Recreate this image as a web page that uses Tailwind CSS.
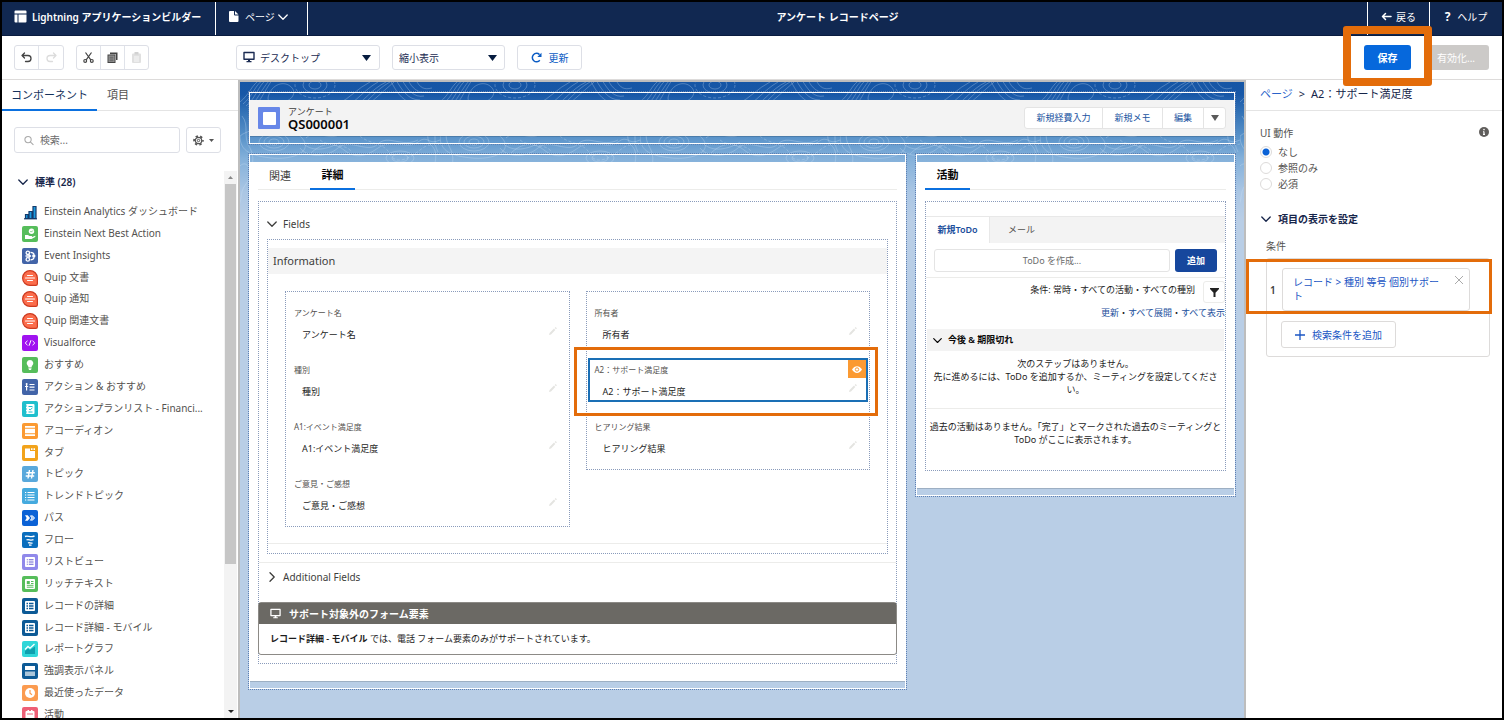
<!DOCTYPE html>
<html lang="ja">
<head>
<meta charset="utf-8">
<meta name="viewport" content="width=device-width, initial-scale=1">
<title>Lightning アプリケーションビルダー</title>
<script src="https://cdn.jsdelivr.net/npm/@tailwindcss/browser@4"></script>
</head>
<body class="flex h-screen flex-col overflow-hidden border-2 border-black bg-white font-['Noto_Sans','Noto_Sans_CJK_JP',sans-serif] text-[10px] leading-4 text-[#3e3e3c]">

<svg class="hidden" aria-hidden="true">
  <defs>
    <symbol id="pencil" viewBox="0 0 10 10"><path d="M1 9l.6-2L6 2.600l1.300 1.300L3 8.400zM6.700 2l1-.9 1.200 1.200-.9 1z" fill="#e4e4e1"/></symbol>
    <symbol id="chev" viewBox="0 0 10 10"><path d="M.8 3L5 7.200 9.200 3" fill="none" stroke="currentColor" stroke-width="1.300" stroke-linecap="round" stroke-linejoin="round"/></symbol>
    <symbol id="quip" viewBox="0 0 16 16"><path d="M8 .6a7.400 7.400 0 1 0 0 14.800h5.800a1.600 1.600 0 0 0 1.600-1.600V8A7.400 7.400 0 0 0 8 .6z" fill="#fb6d4c" stroke="#cd3a1f" stroke-width="1.200"/><path d="M5.500 5.500h5M3.500 8h9M5.500 10.500h5" stroke="#fff" stroke-width="1.100" stroke-linecap="round"/></symbol>
    <symbol id="detail" viewBox="0 0 16 16"><rect width="16" height="16" rx="2" fill="#0d5a96"/><rect x="3" y="3" width="10" height="10" rx="1" fill="#fff"/><path d="M4.500 5.500h1.500M4.500 8h1.500M4.500 10.500h1.500M7 5.500h4.500M7 8h4.500M7 10.500h4.500" stroke="#0d5a96" stroke-width="1.300"/></symbol>
    <symbol id="monitor" viewBox="0 0 12 12"><path d="M1 1.500h10v6.700H1z" fill="none" stroke="currentColor" stroke-width="1.400" stroke-linejoin="round"/><path d="M5 8.500h2v1.500h1.500v1.300h-5V10H5z" fill="currentColor"/></symbol>
  </defs>
</svg>

<header class="flex h-[34px] shrink-0 items-stretch border-b border-[#0a1c3f] bg-[#112851] text-white">
  <div class="flex w-[214px] items-center gap-[5px] border-r border-white pb-1 pl-3 font-semibold">
    <svg class="size-[13px]" viewBox="0 0 13 13" fill="#fff"><path d="M1.500.5h10a1 1 0 0 1 1 1v2h-12v-2a1 1 0 0 1 1-1zM.5 4.500h3v8h-2a1 1 0 0 1-1-1zM4.500 4.500h8v7a1 1 0 0 1-1 1h-7z"/></svg>
    <h1 class="whitespace-nowrap">Lightning アプリケーションビルダー</h1>
  </div>
  <button type="button" class="flex w-[92px] items-center gap-[6px] border-r border-white pb-1 pl-3">
    <svg class="size-[11px]" viewBox="0 0 11 11" fill="#fff"><path d="M2 0h4v3.500a1 1 0 0 0 1 1h3.500V10a1 1 0 0 1-1 1H2a1 1 0 0 1-1-1V1a1 1 0 0 1 1-1zM7 0l3.500 3.500H7z"/></svg>
    <span class="flex items-center gap-[3px]">ページ<svg class="size-[10px]"><use href="#chev"/></svg></span>
  </button>
  <div class="flex flex-1 items-center justify-center pb-1 font-semibold">アンケート レコードページ</div>
  <a href="#" class="flex w-[63px] items-center justify-center gap-1 border-x border-white pb-1">
    <svg class="size-[11px]" viewBox="0 0 11 11" fill="none" stroke="#fff" stroke-width="1.500" stroke-linecap="round" stroke-linejoin="round"><path d="M10 5.500H1.500M4.500 2.500l-3 3 3 3"/></svg>戻る</a>
  <a href="#" class="flex w-[72px] items-center justify-center gap-[7px] pb-1"><span class="text-[12px] font-bold">?</span>ヘルプ</a>
</header>

<div class="flex h-11 shrink-0 items-center border-b border-[#dddbda] pl-3 pr-[13px]">
  <div class="flex h-[25px] divide-x divide-[#e0e3ea] rounded-[3px] border border-[#dddfe6]">
    <button type="button" aria-label="元に戻す" class="flex w-6 items-center justify-center"><svg class="size-[11px]" viewBox="0 0 11 11" fill="none" stroke="#444" stroke-width="1.300" stroke-linecap="round" stroke-linejoin="round"><path d="M3.500 1L1 3.500 3.500 6M1 3.500h6a3 3 0 0 1 0 6H4.500"/></svg></button>
    <button type="button" aria-label="やり直し" class="flex w-6 items-center justify-center"><svg class="size-[11px]" viewBox="0 0 11 11" fill="none" stroke="#dcdcdc" stroke-width="1.300" stroke-linecap="round" stroke-linejoin="round"><path d="M7.500 1L10 3.500 7.500 6M10 3.500H4a3 3 0 0 0 0 6h2.500"/></svg></button>
  </div>
  <div class="ml-3 flex h-[25px] divide-x divide-[#e0e3ea] rounded-[3px] border border-[#dddfe6]">
    <button type="button" aria-label="切り取り" class="flex w-6 items-center justify-center"><svg class="size-[11px]" viewBox="0 0 11 11" fill="none" stroke="#444" stroke-width="1.200"><path d="M2.500.5l5.300 7.300M8.500.5L3.200 7.800"/><circle cx="2.200" cy="8.900" r="1.400"/><circle cx="8.800" cy="8.900" r="1.400"/></svg></button>
    <button type="button" aria-label="コピー" class="flex w-6 items-center justify-center"><svg class="size-[11px]" viewBox="0 0 11 11"><path d="M3 .5h7.500V8H9V2.200H3z" fill="#444"/><rect x="1" y="3" width="7" height="7.500" fill="#999" stroke="#444"/><path d="M2.500 5.200h4M2.500 7h4M2.500 8.800h4" stroke="#444" stroke-width=".7"/></svg></button>
    <button type="button" aria-label="貼り付け" class="flex w-[23px] items-center justify-center"><svg class="size-[11px]" viewBox="0 0 11 11"><rect x="1" y="1.500" width="9" height="9.500" rx="1" fill="#e0e0e0"/><rect x="3.500" y="0" width="4" height="2.500" rx=".6" fill="#d2d2d2"/><path d="M3 5h5M3 7h5M3 9h5" stroke="#fff" stroke-width=".8"/></svg></button>
  </div>
  <div class="relative ml-[87px] w-[144px]">
    <svg class="pointer-events-none absolute left-[7px] top-[6px] size-3 text-[#1b2b52]"><use href="#monitor"/></svg>
    <select aria-label="デバイス" class="h-[25px] w-full appearance-none rounded-[3px] border border-[#dddfe6] bg-white pl-[23px] text-[#1b2b52]"><option>デスクトップ</option></select>
    <svg class="pointer-events-none absolute right-[9px] top-[10px] h-[6px] w-[9px]" viewBox="0 0 9 6"><path d="M0 0h9L4.500 6z" fill="#061c3f"/></svg>
  </div>
  <div class="relative ml-3 w-[113px]">
    <select aria-label="表示サイズ" class="h-[25px] w-full appearance-none rounded-[3px] border border-[#dddfe6] bg-white pl-[6px] text-[#1b2b52]"><option>縮小表示</option></select>
    <svg class="pointer-events-none absolute right-[8px] top-[10px] h-[6px] w-[9px]" viewBox="0 0 9 6"><path d="M0 0h9L4.500 6z" fill="#061c3f"/></svg>
  </div>
  <button type="button" class="ml-3 flex h-[25px] w-[65px] items-center justify-center gap-[7px] rounded-[3px] border border-[#dddfe6] text-[#0b5cc4]">
    <svg class="size-[11px]" viewBox="0 0 11 11" fill="none" stroke="#0b5cc4" stroke-width="1.500"><path d="M8.800 8.200A4.200 4.200 0 1 1 8.500 2.600"/><path d="M6.300 4.900h4.200V.7z" fill="#0b5cc4" stroke="none"/></svg>更新</button>
  <div class="ml-auto flex">
    <div class="relative z-10">
      <div class="bg-white pr-5"><button type="button" class="h-[25px] w-[47px] rounded-[3px] bg-[#0668dc] font-semibold text-white">保存</button></div>
      <div class="pointer-events-none absolute -left-[21px] -right-px -bottom-4 -top-[19px] rounded-[3px] border-8 border-[#e36c0a]"></div>
    </div>
    <button type="button" disabled class="h-[25px] w-[58px] rounded-r-[3px] bg-[#cccac8] pr-[14px] text-right text-white">有効化...</button>
  </div>
</div>

<div class="flex min-h-0 flex-1">
  <aside class="flex w-[236px] shrink-0 flex-col">
    <nav class="flex h-[31px] shrink-0 border-b border-[#e4e4e4] text-[11px]">
      <a href="#" class="-mb-px flex w-[95px] items-center justify-center border-b-2 border-[#0b70df] text-[#16325c]">コンポーネント</a>
      <a href="#" class="flex items-center pl-[10px] text-[#54524f]">項目</a>
    </nav>
    <div class="mt-4 flex shrink-0 gap-[6px] pl-3">
      <label class="flex h-[26px] w-[166px] items-center gap-[6px] rounded-[3px] border border-[#dddfe6] pl-[9px]">
        <svg class="size-[11px]" viewBox="0 0 11 11" fill="none" stroke="#aaa" stroke-width="1.200"><circle cx="4.500" cy="4.500" r="3.500"/><path d="M7 7l3.500 3.500"/></svg>
        <input type="text" aria-label="検索" placeholder="検索..." class="w-full text-[10px] outline-none placeholder:text-[#6b6b6b]">
      </label>
      <button type="button" aria-label="設定" class="flex h-[26px] w-[35px] items-center justify-center gap-[5px] rounded-[3px] border border-[#dddfe6]">
        <svg class="size-[11px]" viewBox="0 0 11 11" fill="none" stroke="#555"><circle cx="5.500" cy="5.500" r="4.400" stroke-width="1.800" stroke-dasharray="2.300 2.308" stroke-dashoffset="1.150"/><circle cx="5.500" cy="5.500" r="3.200" stroke-width="1.200"/><circle cx="5.500" cy="5.500" r="1.200"/></svg>
        <svg class="h-[3px] w-[5px]" viewBox="0 0 5 3"><path d="M0 0h5L2.500 3z" fill="#555"/></svg>
      </button>
    </div>
    <div class="mt-[18px] flex min-h-0 flex-1">
      <div class="min-w-0 flex-1 overflow-hidden">
        <h2 class="flex h-[22px] items-center gap-[7px] pl-4 font-semibold text-[#16254a]"><svg class="size-[10px]"><use href="#chev"/></svg>標準 (28)</h2>
        <ul class="mt-[7px] grid h-[525px] auto-rows-fr pl-5 text-[#54524f] [&>li]:flex [&>li]:items-center [&>li]:gap-[6px] [&>li]:whitespace-nowrap [&_svg]:mt-[2px] [&_svg]:size-4 [&_svg]:shrink-0">
          <li><svg viewBox="0 0 16 16"><path d="M3.500 10.500h2.500v4H3.500zM7 7.500h3v7H7zM11 2.500h3v12h-3z" fill="#1a9be0" stroke="#143a6b" stroke-width="1.200"/><path d="M2 14.800h13" stroke="#143a6b" stroke-width="1.200"/></svg>Einstein Analytics ダッシュボード</li>
          <li><svg viewBox="0 0 16 16"><rect width="16" height="16" rx="2" fill="#56bd5b"/><circle cx="9.500" cy="5.200" r="2.700" fill="#fff"/><path d="M8.400 5.200l.9.900 1.600-1.600" stroke="#56bd5b" fill="none" stroke-width=".8"/><path d="M3 9h2.800l1.800 1h2.200l.4 1 3-1.200c.5.500.2 1.200-.4 1.500L9.500 13H3z" fill="#fff"/></svg>Einstein Next Best Action</li>
          <li><svg viewBox="0 0 16 16"><rect width="16" height="16" rx="2" fill="#4264a8"/><g fill="none" stroke="#fff" stroke-width="1.300"><circle cx="5.800" cy="4.800" r="1.700"/><circle cx="5.800" cy="11.400" r="1.700"/><path d="M8.500 4.300c2.200 0 3.300 1 3.500 2.300M8.500 11.800c2.200 0 3.300-1 3.500-2.300M3.500 8h4.500M6.800 6.500L8.500 8 6.800 9.600"/></g><circle cx="11.800" cy="8" r="1.700" fill="#fff"/></svg>Event Insights</li>
          <li><svg><use href="#quip"/></svg>Quip 文書</li>
          <li><svg><use href="#quip"/></svg>Quip 通知</li>
          <li><svg><use href="#quip"/></svg>Quip 関連文書</li>
          <li><svg viewBox="0 0 16 16"><rect width="16" height="16" rx="2" fill="#a013f0"/><path d="M5.500 5.800L3.200 8l2.300 2.200M10.500 5.800L12.800 8l-2.300 2.200M9 5.200L7 10.800" fill="none" stroke="#fff"/></svg>Visualforce</li>
          <li><svg viewBox="0 0 16 16"><rect width="16" height="16" rx="2" fill="#56bd5b"/><path d="M8 3a3.400 3.400 0 0 1 2 6.100c-.4.400-.4.900-.4 1.300H6.400c0-.4 0-.9-.4-1.300A3.400 3.400 0 0 1 8 3zM6.500 11.200h3v.8L8.800 13H7.200l-.7-1z" fill="#fff"/></svg>おすすめ</li>
          <li><svg viewBox="0 0 16 16"><rect width="16" height="16" rx="2" fill="#4264a8"/><path d="M3 7.500h3.200M4.600 5.500v6M7.500 5.500h5M7.500 8.200h5M7.500 11h5" stroke="#fff" stroke-width="1.200"/><circle cx="4.600" cy="5" r="1" fill="#fff"/></svg>アクション &amp; おすすめ</li>
          <li><svg viewBox="0 0 16 16"><rect width="16" height="16" rx="2" fill="#20bfcd"/><rect x="4" y="3" width="8.500" height="10" rx="1" fill="#fff"/><path d="M3 5h2M3 8h2M3 11h2M6.500 5.500h4M6.500 11h4M7 8l1.200 1 2.300-2.300" stroke="#20bfcd" fill="none"/></svg>アクションプランリスト - Financi...</li>
          <li><svg viewBox="0 0 16 16"><rect width="16" height="16" rx="2" fill="#fb9a32"/><path d="M3 3h10v1.700H3zM3 5.700h10v4.500H3zM3 11.300h10V13H3z" fill="#fff"/></svg>アコーディオン</li>
          <li><svg viewBox="0 0 16 16"><rect width="16" height="16" rx="2" fill="#f2a31b"/><path d="M3 3.500h5V6h5v7H3z" fill="#fff"/><path d="M9 3.300h1.500V5H9zM11.500 3.300H13V5h-1.500z" fill="#fff"/></svg>タブ</li>
          <li><svg viewBox="0 0 16 16"><rect width="16" height="16" rx="2" fill="#5aa9dc"/><path d="M7.500 4l-1.500 8.500M11 4l-1.500 8.500M4.300 6.700h8.500M3.700 10h8.500" stroke="#fff" stroke-width="1.400"/></svg>トピック</li>
          <li><svg viewBox="0 0 16 16"><rect width="16" height="16" rx="2" fill="#45aade"/><path d="M3 4.500h1.200M3 7h1.200M3 9.500h1.200M3 12h1.200M5.500 4.500h7M5.500 7h7M5.500 9.500h7M5.500 12h7" stroke="#fff" stroke-width="1.100"/></svg>トレンドトピック</li>
          <li><svg viewBox="0 0 16 16"><rect width="16" height="16" rx="2" fill="#0b62d6"/><path d="M3 5.300h2.700L8 8l-2.300 2.700H3L4.700 8z" fill="#fff"/><path d="M8.300 5.800h2.300L12.700 8l-2.100 2.200H8.300L9.900 8z" fill="#a9cbf5" stroke="#fff" stroke-width=".7"/></svg>パス</li>
          <li><svg viewBox="0 0 16 16"><rect width="16" height="16" rx="2" fill="#0a6ebd"/><path d="M3 4.500c3-1.500 5 1.500 9.500-.5M4.500 8c2-1.200 4 1 7-.3M6 11c1.500-.9 2.500.7 4.500 0M7 13c1 0 1.500.3 2.500 0" fill="none" stroke="#fff" stroke-width="1.400"/></svg>フロー</li>
          <li><svg viewBox="0 0 16 16"><rect width="16" height="16" rx="2" fill="#9089ea"/><rect x="3" y="3" width="10" height="10" rx="1" fill="#fff"/><path d="M4.800 5.800h1M4.800 8h1M4.800 10.200h1M6.800 5.800h4.700M6.800 8h4.700M6.800 10.200h4.700" stroke="#6a62cf" stroke-width="1.100"/></svg>リストビュー</li>
          <li><svg viewBox="0 0 16 16"><rect width="16" height="16" rx="2" fill="#56bd5b"/><rect x="3" y="3" width="10" height="10" rx="1" fill="#fff"/><path d="M4.800 5h3v3h-3z" fill="#56bd5b"/><path d="M9 5.500h2.500M9 7.500h2.500M4.800 9.300h6.700M4.800 11.200h6.700" stroke="#56bd5b"/></svg>リッチテキスト</li>
          <li><svg><use href="#detail"/></svg>レコードの詳細</li>
          <li><svg><use href="#detail"/></svg>レコード詳細 - モバイル</li>
          <li><svg viewBox="0 0 16 16"><rect width="16" height="16" rx="2" fill="#2fd6d8"/><path d="M3 10l3-2.500 2 1.500L13 5.500V13H3z" fill="#0f9fae"/><path d="M3 8.500L6 5.500l2 1.700L12.500 3" stroke="#fff" stroke-width="1.300" fill="none"/></svg>レポートグラフ</li>
          <li><svg viewBox="0 0 16 16"><rect width="16" height="16" rx="2" fill="#0d5a96"/><path d="M3 3h10v4H3z" fill="#fff"/><path d="M3 8.500h10V13H3z" fill="#a9c5da"/></svg>強調表示パネル</li>
          <li><svg viewBox="0 0 16 16"><rect width="16" height="16" rx="2" fill="#fb9b50"/><circle cx="8" cy="8" r="5" fill="#fff"/><path d="M8 5v3.300l2 1.500" stroke="#fb9b50" stroke-width="1.200" fill="none"/></svg>最近使ったデータ</li>
          <li><svg viewBox="0 0 16 16"><rect width="16" height="16" rx="2" fill="#ee5f76"/><rect x="3.500" y="4" width="9" height="9" rx="1" fill="#fff"/><path d="M5.500 3h1.500v2.500H5.500zM9 3h1.500v2.500H9z" fill="#fff"/><path d="M5 7h6" stroke="#ee5f76"/></svg>活動</li>
        </ul>
      </div>
      <div class="mr-px flex w-[13px] flex-col items-center bg-[#f3f3f3]" aria-hidden="true">
        <svg class="my-[5px] h-[3px] w-[5px] shrink-0" viewBox="0 0 5 3"><path d="M0 3h5L2.500 0z" fill="#888"/></svg>
        <div class="h-[380px] w-[11px] shrink-0 bg-[#c6c6c6]"></div>
        <svg class="mb-[5px] mt-auto h-[3px] w-[6px] shrink-0" viewBox="0 0 6 3"><path d="M0 0h6L3 3z" fill="#222"/></svg>
      </div>
    </div>
  </aside>

  <main class="relative isolate min-w-0 flex-1 overflow-hidden border-x-2 border-t-2 border-[#bdbdbd] bg-[#b9cee6] bg-[linear-gradient(#1656a5_0px,#1757a7_12px,#3372b6_30px,#5b94ca_56px,#83b0da_76px,#aac6e4_110px,#b9cee6_140px)] px-2 pt-[9px]">
    <svg class="absolute inset-x-0 top-0 -z-10 h-[140px] w-full" aria-hidden="true">
      <defs>
        <pattern id="topo" width="200" height="140" patternUnits="userSpaceOnUse">
          <g fill="none" stroke="#cfe3f7" stroke-opacity=".3" stroke-width="1">
            <ellipse cx="75" cy="3" rx="6" ry="4"/><ellipse cx="75" cy="3" rx="12" ry="8"/><ellipse cx="75" cy="3" rx="20" ry="13" stroke-dasharray="3 2"/>
            <path d="M0 20C10 12 12 2 20-2M3 22C13 14 15 3 23-2M6 24C16 16 18 4 26-2M9 26C18 18 22 6 30-2M12 28c8-8 12-18 20-30M28 16c2-12 14-18 22-12s2 14-6 16-16 4-16-4z"/>
            <path d="M98 22c12-6 20-16 32-22M104 26c12-6 20-18 34-26M110 28c14-8 20-20 36-28M114 29c14-8 21-21 36-29M118 30c12-8 22-18 36-30"/>
            <path d="M150-2c6 10 10 20 24 24M156-2c6 10 12 20 24 20M162-2c6 10 12 18 22 16M168-2c4 8 10 14 20 12M176-2c4 8 8 10 16 8"/>
            <ellipse cx="34" cy="60" rx="5" ry="3"/><ellipse cx="34" cy="60" rx="10" ry="6"/><ellipse cx="34" cy="60" rx="15" ry="9"/>
            <path d="M0 54c12-10 50-12 62 2s-10 22-30 20S0 70 0 54M66 56c10-10 24 4 34-4s14 4 28 0M70 72c12-12 24-12 34-4s20 8 34-2 30 2 40-6 10 4 22-2"/>
            <path d="M60 66c8 10 26 10 38 0s30 6 40-4 24 4 40-4M64 62c8 8 24 6 36-2"/>
            <path d="M80 58c10 8 24 2 32 12M120 54c8 8 24 6 30 18s20 4 30-4 12-4 20-6" stroke-dasharray="3 2"/>
            <ellipse cx="160" cy="76" rx="14" ry="7"/><ellipse cx="160" cy="76" rx="8" ry="4"/>
            <path d="M0 84c8-8 14 8 6 18s-2 18-10 24M2 34c8 10 0 20 8 32s-4 30 2 44M186 34c8 10-4 20 6 30s-4 26 4 40M192 40c6 10 0 20 6 30"/>
          </g>
        </pattern>
      </defs>
      <rect width="100%" height="140" fill="url(#topo)"/>
    </svg>

    <section class="border border-dotted border-[#5d7fb3]">
      <div class="border border-white py-[7px]">
        <div class="flex h-9 items-center bg-[#f3f3f3] px-2 shadow-[0_1px_0_rgba(0,0,0,0.15)]">
          <span class="flex size-[22px] items-center justify-center rounded-[1px] bg-[#6787e8]" aria-hidden="true"><span class="size-[13px] rounded-[1px] bg-white"></span></span>
          <div class="ml-2">
            <p class="text-[9px] leading-3">アンケート</p>
            <h2 class="text-[13px] font-semibold leading-3 text-[#080707]">QS000001</h2>
          </div>
          <div class="ml-auto flex h-[22px] divide-x divide-[#e4e4e4] rounded-[3px] border border-[#e4e4e4] bg-white text-[9px] text-[#20539f]">
            <button type="button" class="w-[78px]">新規経費入力</button>
            <button type="button" class="w-[60px]">新規メモ</button>
            <button type="button" class="w-[41px]">編集</button>
            <button type="button" aria-label="その他のアクション" class="flex w-[21px] items-center justify-center"><svg class="h-[6px] w-2" viewBox="0 0 8 6"><path d="M0 0h8L4 6z" fill="#5a5a5a"/></svg></button>
          </div>
        </div>
      </div>
    </section>

    <div class="mt-2 grid grid-cols-[659fr_321fr] items-start gap-2">
      <section class="border border-dotted border-[#5d7fb3]">
        <div class="border border-white py-[7px]">
          <div class="bg-white px-2 pb-[17px] shadow-[0_1px_0_rgba(0,0,0,0.15)]">
            <nav class="flex h-7 border-b border-[#ececea] text-[11px]">
              <a href="#" class="flex w-[44px] items-center justify-center">関連</a>
              <a href="#" class="-mb-px ml-2 flex w-[45px] items-center justify-center border-b-2 border-[#0b70df] font-semibold text-[#080707]">詳細</a>
            </nav>
            <div class="mt-[11px] border border-dotted border-[#8a9bbb] pb-2">
              <h3 class="flex h-[37px] items-center gap-[6px] pl-2 pt-[6px]"><svg class="size-[10px]"><use href="#chev"/></svg>Fields</h3>
              <div class="mx-2 border border-dotted border-[#8a9bbb] py-2">
                <h4 class="flex h-[26px] items-center bg-[#f4f4f4] pl-[5px] text-[11px]">Information</h4>
                <div class="mb-px grid grid-cols-2 items-start gap-4 border-b border-[#ececea] px-[17px] pb-4 pt-[17px] text-[9px] text-[#1c1c1c] [&_dd]:flex [&_dd]:h-4 [&_dd]:items-center [&_dd]:justify-between [&_dd]:pl-2 [&_dd]:pr-2 [&_dd_svg]:mb-2 [&_dd_svg]:size-[10px] [&_dt]:mb-[6px] [&_dt]:h-4 [&_dt]:text-[8px] [&_dt]:text-[#54524f]">
                  <dl class="grid gap-[13px] border border-dotted border-[#8a9bbb] px-px pb-[10px] pt-[9px]">
                    <div class="border-2 border-transparent pl-[5px] pt-[2px]"><dt>アンケート名</dt><dd>アンケート名<svg><use href="#pencil"/></svg></dd></div>
                    <div class="border-2 border-transparent pl-[5px] pt-[2px]"><dt>種別</dt><dd>種別<svg><use href="#pencil"/></svg></dd></div>
                    <div class="border-2 border-transparent pl-[5px] pt-[2px]"><dt>A1:イベント満足度</dt><dd>A1:イベント満足度<svg><use href="#pencil"/></svg></dd></div>
                    <div class="border-2 border-transparent pl-[5px] pt-[2px]"><dt>ご意見・ご感想</dt><dd>ご意見・ご感想<svg><use href="#pencil"/></svg></dd></div>
                  </dl>
                  <dl class="grid gap-[13px] border border-dotted border-[#8a9bbb] px-px pb-[10px] pt-[9px]">
                    <div class="border-2 border-transparent pl-[5px] pt-[2px]"><dt>所有者</dt><dd>所有者<svg><use href="#pencil"/></svg></dd></div>
                    <div class="relative border-2 border-[#1a6fb5] pl-[5px] pt-[2px]">
                      <dt>A2：サポート満足度</dt><dd>A2：サポート満足度<svg><use href="#pencil"/></svg></dd>
                      <span class="absolute right-0 top-0 flex size-[18px] items-center justify-center bg-[#fb9a32]"><svg class="h-[7px] w-[10px]" viewBox="0 0 10 7"><path d="M0 3.500C2.500-1 7.500-1 10 3.500 7.500 8 2.500 8 0 3.500z" fill="#fff"/><circle cx="5" cy="3.500" r="1.700" fill="none" stroke="#fb9a32"/></svg></span>
                      <div class="pointer-events-none absolute -bottom-4 -left-4 -right-3 -top-[13px] border-[3px] border-[#e36c0a]"></div>
                    </div>
                    <div class="border-2 border-transparent pl-[5px] pt-[2px]"><dt>ヒアリング結果</dt><dd>ヒアリング結果<svg><use href="#pencil"/></svg></dd></div>
                  </dl>
                </div>
              </div>
              <h3 class="mt-2 flex h-[29px] items-center gap-[6px] border-t border-[#ececea] pl-2"><svg class="size-[10px] -rotate-90"><use href="#chev"/></svg>Additional Fields</h3>
              <div class="-mx-px mt-[11px] rounded-[3px] border border-[#8c8a86]">
                <h4 class="flex h-[21px] items-center gap-2 bg-[#6b6964] pl-[11px] font-semibold text-white"><svg class="size-[11px]"><use href="#monitor"/></svg>サポート対象外のフォーム要素</h4>
                <p class="flex h-[30px] items-center whitespace-pre pl-[11px] text-[9px] text-[#1c1c1c]"><b class="font-semibold">レコード詳細 - モバイル</b> では、電話 フォーム要素のみがサポートされています。</p>
              </div>
            </div>
          </div>
        </div>
      </section>

      <section class="border border-dotted border-[#5d7fb3]">
        <div class="border border-white py-[7px]">
          <div class="bg-white px-2 pb-[17px] shadow-[0_1px_0_rgba(0,0,0,0.15)]">
            <nav class="flex h-7 border-b border-[#ececea] text-[11px]">
              <a href="#" class="-mb-px flex w-[45px] items-center justify-center border-b-2 border-[#0b70df] font-semibold text-[#080707]">活動</a>
            </nav>
            <div class="mt-[11px] border border-dotted border-[#8a9bbb] pb-6 pt-[14px] text-[9px] text-[#1c1c1c]">
              <div class="flex h-[27px] border-t border-[#e8e8e8] bg-[#f3f3f3]">
                <button type="button" class="w-16 border-r border-[#e8e8e8] bg-white font-semibold text-[#1b4f9c]">新規ToDo</button>
                <button type="button" class="px-[18px] text-[#54524f]">メール</button>
              </div>
              <div class="flex gap-[5px] border-b border-[#ececea] px-2 pb-[5px] pt-[6px]">
                <input type="text" aria-label="ToDo を作成" placeholder="ToDo を作成..." class="h-[23px] min-w-0 flex-1 rounded-[3px] border border-[#e4e4e4] text-center placeholder:text-[#6b6b6b]">
                <button type="button" class="h-[23px] w-[42px] rounded-[3px] bg-[#16479d] font-semibold text-white">追加</button>
              </div>
              <div class="mt-[3px] flex items-center justify-end gap-2">
                <span class="mb-1">条件: 常時・すべての活動・すべての種別</span>
                <button type="button" aria-label="絞り込み" class="flex h-[22px] w-[22px] items-center justify-center rounded-[3px] border border-[#ececea]"><svg class="h-[9px] w-[9px]" viewBox="0 0 9 9"><path d="M0 0h9v1L5.500 4.800V9h-2V4.800L0 1z" fill="#222"/></svg></button>
              </div>
              <p class="mt-[2px] text-right"><a href="#" class="text-[#1b4f9c]">更新</a>・<a href="#" class="text-[#1b4f9c]">すべて展開</a>・<a href="#" class="text-[#1b4f9c]">すべて表示</a></p>
              <h3 class="mx-px mt-2 flex h-[22px] items-center gap-[6px] bg-[#f3f3f3] pl-[6px] font-semibold text-[#080707]"><svg class="size-[9px]"><use href="#chev"/></svg>今後 &amp; 期限切れ</h3>
              <p class="border-b border-[#ececea] px-1 pb-3 pt-[6px] text-center leading-[13px]">次のステップはありません。<br>先に進めるには、ToDo を追加するか、ミーティングを設定してください。</p>
              <p class="-mx-px pt-[11px] text-center leading-[13px]">過去の活動はありません。「完了」とマークされた過去のミーティングと ToDo がここに表示されます。</p>
            </div>
          </div>
        </div>
      </section>
    </div>
  </main>

  <aside class="w-[256px] shrink-0">
    <nav class="flex h-[31px] items-center gap-[6px] border-b border-[#e4e4e4] pb-[3px] pl-[14px] text-[11px] text-[#16254a]"><a href="#" class="text-[#2a62c9]">ページ</a><span>&gt;</span><span>A2：サポート満足度</span></nav>
    <div class="px-3 pt-[14px]">
      <fieldset class="pl-[2px] text-[#54524f]">
        <legend class="flex w-full items-center justify-between pr-px"><span>UI 動作</span><svg class="mb-[2px] size-[10px]" viewBox="0 0 10 10"><circle cx="5" cy="5" r="5" fill="#605e5c"/><path d="M5 4.400v3M4 4.700h1M4 7.400h2" stroke="#fff" stroke-width="1.100"/><circle cx="5" cy="2.600" r=".8" fill="#fff"/></svg></legend>
        <div class="mt-[3px] flex flex-col text-[10px] [&_input]:size-3 [&_input]:appearance-none [&_input]:rounded-full [&_input]:border [&_input]:border-[#dddbda] [&_input:checked]:bg-[radial-gradient(circle,#0b62d6_0_3px,#fff_4px)] [&_label]:flex [&_label]:h-4 [&_label]:items-center [&_label]:gap-[6px]">
          <label><input type="radio" name="behavior" checked>なし</label>
          <label><input type="radio" name="behavior">参照のみ</label>
          <label><input type="radio" name="behavior">必須</label>
        </div>
      </fieldset>
      <h3 class="mt-[19px] flex h-4 items-center gap-[7px] pl-[3px] font-semibold text-[#16254a]"><svg class="size-[10px]"><use href="#chev"/></svg>項目の表示を設定</h3>
      <p class="mt-[11px] pl-2 text-[#54524f]">条件</p>
      <div class="relative ml-2 mt-1 rounded-[3px] border border-[#dddbda] pb-2 pl-[3px] pr-[19px] pt-[9px]">
        <div class="flex items-center">
          <span class="w-3 font-semibold">1</span>
          <div class="flex h-[43px] min-w-0 flex-1 items-start rounded-[3px] border border-[#dddbda] pl-[10px] pr-[5px] pt-[6px]">
            <a href="#" class="flex-1 leading-[14px] text-[#1b56c4]">レコード &gt; 種別 等号 個別サポート</a>
            <button type="button" aria-label="削除" class="ml-2 size-[10px] shrink-0"><svg class="size-[10px]" viewBox="0 0 10 10" stroke="#aaa"><path d="M1 1l8 8M9 1L1 9"/></svg></button>
          </div>
        </div>
        <button type="button" class="ml-[11px] mt-[10px] flex h-[27px] w-[115px] items-center justify-center gap-[7px] rounded-[3px] border border-[#dddbda] text-[#1b56c4]"><svg class="size-[10px]" viewBox="0 0 10 10" stroke="#1b56c4" stroke-width="1.300"><path d="M5 0v10M0 5h10"/></svg>検索条件を追加</button>
        <div class="pointer-events-none absolute -left-[21px] -right-[3px] top-0 h-[55px] border-[3px] border-[#e36c0a]"></div>
      </div>
    </div>
  </aside>
</div>
</body>
</html>
